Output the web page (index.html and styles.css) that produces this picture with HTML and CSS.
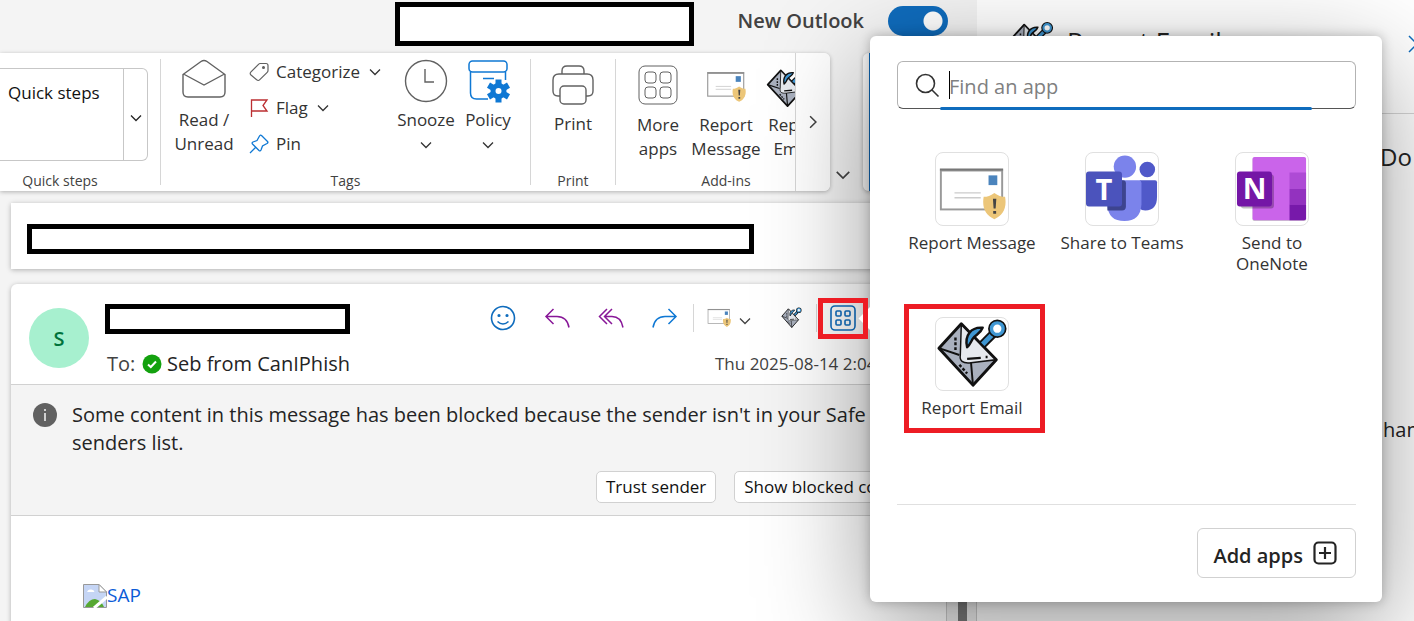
FILE: index.html
```html
<!DOCTYPE html>
<html lang="en">
<head>
<meta charset="utf-8">
<title>Outlook</title>
<link rel="stylesheet" href="styles.css">
</head>
<body>
<svg class="defs" aria-hidden="true">
  <symbol id="chev" viewBox="0 0 12 8"><path d="M1 1.500 6 6.500 11 1.500" fill="none" stroke="currentColor" stroke-width="1.300"/></symbol>
  <symbol id="grid" viewBox="0 0 40 40"><g fill="none" stroke="currentColor"><rect x="1" y="1" width="38" height="38" rx="6"/><rect x="7" y="7" width="11" height="11" rx="3"/><rect x="22" y="7" width="11" height="11" rx="3"/><rect x="7" y="22" width="11" height="11" rx="3"/><rect x="22" y="22" width="11" height="11" rx="3"/></g></symbol>
  <symbol id="apps" viewBox="0 0 26 26"><g fill="none" stroke="currentColor" stroke-width="1.600"><rect x="1" y="1" width="24" height="24" rx="4"/><rect x="6" y="6" width="5" height="5" rx="1"/><rect x="15" y="6" width="5" height="5" rx="1"/><rect x="6" y="15" width="5" height="5" rx="1"/><rect x="15" y="15" width="5" height="5" rx="1"/></g></symbol>
  <symbol id="report" viewBox="0 0 70 54">
    <rect x="3" y="3" width="63" height="40" fill="#fff" stroke="#999" stroke-width="2"/>
    <path d="M2 2h65" stroke="#777" stroke-width="2"/>
    <path d="M17 26h27M17 31h27" stroke="#ccc" stroke-width="1.500"/>
    <rect x="52" y="8" width="9" height="10" fill="#4b84bd"/>
    <path d="M58 26c4 3 7 4 11 4 2 11-2 19-11 23-9-4-13-12-11-23 4 0 7-1 11-4z" fill="#ecc679"/>
    <path d="M56.500 32h3.500l-.7 10h-2.100zM56.800 44.500h3v3h-3z" fill="#444"/>
  </symbol>
  <symbol id="hook" viewBox="0 0 74 74">
    <path d="M3 31 26 6 62 43 38 69z" fill="#a9b0be" stroke="#111" stroke-width="3" stroke-linejoin="round"/>
    <path d="M26 7 61 43 36 46C27 47 24 44 25 38z" fill="#e6e9ee" stroke="#111" stroke-width="1.500"/>
    <path d="M3 31 24 38M36 46l2 23" fill="none" stroke="#111" stroke-width="2"/>
    <path d="M32 42l14-1M51 40h2" stroke="#111" stroke-width="2.500"/>
    <path d="M20 20v13M24 48l8 9" stroke="#111" stroke-width="2.500" stroke-dasharray="3 2"/>
    <path d="M47 28 59 16" stroke="#111" stroke-width="9"/>
    <path d="M48 27 59 16" stroke="#3f97d3" stroke-width="5"/>
    <circle cx="63" cy="11" r="6" fill="none" stroke="#111" stroke-width="7"/>
    <circle cx="63" cy="11" r="6" fill="#fff" stroke="#3f97d3" stroke-width="3.500"/>
    <path d="M48 10C36 9 29 18 32 30 35 28 36 24 38 21 41 17 46 16 48 10z" fill="#3f97d3" stroke="#111" stroke-width="2.500" stroke-linejoin="round"/>
  </symbol>
</svg>

<div class="app">
  <main class="main">
    <header class="topbar">
      <div class="redacted redacted-top"></div>
      <label class="switch">New Outlook <input type="checkbox" role="switch" checked></label>
    </header>

    <div class="ribbon-row">
      <div class="ribbon">
        <section class="group group-quick">
          <div class="quick-box"><button class="quick-name">Quick steps</button><button class="quick-more" aria-label="More quick steps"><svg class="chev"><use href="#chev"/></svg></button></div>
          <h2 class="group-label">Quick steps</h2>
        </section>
        <section class="group group-tags">
          <div class="tools">
            <button class="tool tool-read">
              <svg class="big" viewBox="0 0 44 44" fill="none" stroke="#616161" stroke-width="1.400"><path d="M1 15.500 19 2.500q3-2 6 0L43 15.500V33q0 5-5 5H6q-5 0-5-5zM1.500 15 22 26 42.500 15"/></svg>
              <span>Read /<br>Unread</span>
            </button>
            <div class="stack">
              <button class="line"><svg class="small" viewBox="0 0 20 20" fill="none" stroke="#616161" stroke-width="1.200"><path d="M11 1.500h6q2 0 2 2v5q0 1-.8 1.800l-7.400 7.400q-1.600 1.600-3.200 0L2 13q-1.600-1.600 0-3.200l7.500-7.500q.8-.8 1.500-.8z"/><circle cx="14.500" cy="5.500" r=".9" fill="#616161"/></svg>Categorize<svg class="chev"><use href="#chev"/></svg></button>
              <button class="line"><svg class="small" viewBox="0 0 20 20" fill="none" stroke="#bc2f32" stroke-width="1.300"><path d="M2.500 19V2H18l-4 5.500L18 13H2.500"/></svg>Flag<svg class="chev"><use href="#chev"/></svg></button>
              <button class="line"><svg class="small" viewBox="0 0 20 20" fill="none" stroke="#0f78d4" stroke-width="1.300"><path d="m12.500 1.500 6 6q1 1-.5 2l-4.500 2.500-1.500 4q-.7 1.500-2 .5L3.500 10q-1-1.200.5-2l4-1.500L10.500 2q1-1.500 2-.5zM6.500 13.500 1 19"/></svg>Pin</button>
            </div>
            <button class="tool tool-side">
              <svg class="big" viewBox="0 0 44 44" fill="none" stroke="#616161" stroke-width="1.400"><circle cx="22" cy="22" r="20.500"/><path d="M21 10v13h9"/></svg>
              <span>Snooze</span><svg class="chev"><use href="#chev"/></svg>
            </button>
            <button class="tool tool-side">
              <svg class="big" viewBox="0 0 44 44" fill="none" stroke="#0f78d4" stroke-width="1.500"><rect x="3" y="2" width="38" height="11" rx="3.500"/><path d="M4.500 13v21q0 6 6 6H22M39.500 13v8M17 19.500h11"/><g transform="translate(32.500 32)"><circle r="5.500" stroke-width="5"/><path d="M0-11.500V-6M0 6V11.500M-10-5.800l5 2.900M10 5.800 5 2.900M10-5.800 5-2.900M-10 5.800l5-2.900" stroke-width="6"/></g></svg>
              <span>Policy</span><svg class="chev"><use href="#chev"/></svg>
            </button>
          </div>
          <h2 class="group-label">Tags</h2>
        </section>
        <section class="group group-print">
          <div class="tools"><button class="tool tool-print">
            <svg class="big" viewBox="0 0 44 44" fill="none" stroke="#616161" stroke-width="1.400"><path d="M9 33H7q-5 0-5-5V17q0-6 6-6h28q6 0 6 6v11q0 5-5 5h-2M11 11V8q0-5 5-5h12q5 0 5 5v3"/><rect x="9" y="23" width="26" height="18" rx="4" fill="#fff"/></svg>
            <span>Print</span></button></div>
          <h2 class="group-label">Print</h2>
        </section>
        <section class="group group-addins">
          <div class="tools">
            <button class="tool tool-more"><svg class="big"><use href="#grid"/></svg><span>More<br>apps</span></button>
            <button class="tool tool-msg"><svg class="big"><use href="#report"/></svg><span>Report<br>Message</span></button>
            <button class="tool tool-mail"><svg class="big"><use href="#hook"/></svg><span>Report<br>Email</span></button>
          </div>
          <h2 class="group-label">Add-ins</h2>
        </section>
        <button class="ribbon-next" aria-label="Scroll ribbon"><svg class="chev chev-right"><use href="#chev"/></svg></button>
      </div>
      <button class="ribbon-fold" aria-label="Ribbon display"><svg class="chev chev-wide"><use href="#chev"/></svg></button>
      <div class="side-card"></div>
    </div>

    <div class="reading">
      <div class="cards">
        <div class="card subject"><div class="redacted redacted-subject"></div></div>
        <article class="card message">
          <header class="msg-head">
            <div class="avatar">S</div>
            <div class="who">
              <div class="redacted redacted-from"></div>
              <div class="to"><span class="to-label">To:</span><svg class="tick" viewBox="0 0 20 20"><circle cx="10" cy="10" r="9.500" fill="#13a10e"/><path d="m6 10.500 2.800 2.500L14 7.500" fill="none" stroke="#fff" stroke-width="2"/></svg>Seb from CanIPhish</div>
            </div>
            <div class="meta">
              <div class="actions">
                <button class="act" aria-label="React"><svg viewBox="0 0 26 26" fill="none" stroke="#0f6cbd" stroke-width="1.600"><circle cx="13" cy="13" r="11.500"/><path d="M7.500 16.500q5.500 5 11 0"/><circle cx="9" cy="10.500" r=".8" fill="#0f6cbd"/><circle cx="17" cy="10.500" r=".8" fill="#0f6cbd"/></svg></button>
                <button class="act" aria-label="Reply"><svg viewBox="0 0 26 26" fill="none" stroke="#881798" stroke-width="1.500"><path d="M9.500 4 2 11.500 9.500 19M2 11.500h11q10 0 12 11"/></svg></button>
                <button class="act" aria-label="Reply all"><svg viewBox="0 0 26 26" fill="none" stroke="#881798" stroke-width="1.500"><path d="M9 4 1.500 11.500 9 19M14 4 6.500 11.500 14 19M6.500 11.500H14q9 0 11 11"/></svg></button>
                <button class="act" aria-label="Forward"><svg viewBox="0 0 26 26" fill="none" stroke="#0f78d4" stroke-width="1.500"><path d="M16.500 4 24 11.500 16.500 19M24 11.500H13q-10 0-12 11"/></svg></button>
                <span class="rule"></span>
                <button class="act act-msg" aria-label="Report Message"><svg viewBox="0 0 70 54"><use href="#report"/></svg><svg class="chev"><use href="#chev"/></svg></button>
                <button class="act act-hook" aria-label="Report Email"><svg viewBox="0 0 74 62" preserveAspectRatio="none"><use href="#hook" width="74" height="62" preserveAspectRatio="none"/></svg></button>
                <span class="rule"></span>
                <button class="act act-apps" aria-label="Apps"><svg><use href="#apps"/></svg><span class="mark mark-apps"></span></button>
              </div>
              <time class="date">Thu 2025-08-14 2:04 PM</time>
            </div>
          </header>
          <div class="notice">
            <svg class="info" viewBox="0 0 24 24"><circle cx="12" cy="12" r="12" fill="#616161"/><path d="M12 10v8M12 6v2" stroke="#ddd" stroke-width="1.800"/></svg>
            <p>Some content in this message has been blocked because the sender isn't in your Safe senders list.</p>
            <div class="notice-actions"><button>Trust sender</button><button>Show blocked content</button></div>
          </div>
          <div class="msg-body">
            <a href="#"><svg class="broken" viewBox="0 0 24 24"><path d="M.5.500H16L23.500 8v15.500H.5z" fill="#c5d5f5" stroke="#999"/><path d="M16 .5V8h7.500z" fill="#fff" stroke="#999"/><path d="M4 8q1-3 3.500-2.500Q11 5 11.500 8z" fill="#fff"/><path d="M2 23q4-8 10-8 6 1 9 8z" fill="#56a832"/><path d="M24 13 11 24" stroke="#fff" stroke-width="3"/></svg>SAP</a>
          </div>
        </article>
      </div>
      <div class="scrollbar"><span></span></div>
    </div>
  </main>

  <aside class="pane">
    <header class="pane-head"><svg class="pane-icon"><use href="#hook"/></svg><h2>Report Email</h2><button aria-label="Close pane"><svg viewBox="0 0 18 18"><path d="m1 1 16 16M17 1 1 17" stroke="#0f6cbd" stroke-width="1.500"/></svg></button></header>
    <p class="pane-first">Do</p>
    <p class="pane-second">han</p>
  </aside>

  <div class="popover" role="dialog" aria-label="Apps">
    <label class="search">
      <svg viewBox="0 0 24 24" fill="none" stroke="#333" stroke-width="1.600"><circle cx="10.500" cy="10.500" r="9"/><path d="m17 17 6.500 6.500"/></svg>
      <span class="caret"></span>
      <input type="text" placeholder="Find an app" aria-label="Find an app">
    </label>
    <div class="apps">
      <button class="app-item"><span class="tile"><svg viewBox="-2 -15 74 74"><use href="#report" width="70" height="54"/></svg></span>Report Message</button>
      <button class="app-item"><span class="tile"><svg viewBox="0 0 74 74">
        <circle cx="40" cy="14" r="11.500" fill="#7b83eb"/><circle cx="63" cy="17" r="8" fill="#5059c9"/>
        <path d="M55 28h16q2 0 2 2v15q0 14-12 14-4 0-6-2z" fill="#5059c9"/>
        <path d="M22 28h32q3 0 3 3v22q-1 17-17.500 17T22 54z" fill="#7b83eb"/>
        <path d="M22 28h16q3 0 3 3v24q0 4-4 4H22z" fill="#3d448f"/>
        <rect x="0" y="19" width="37" height="36" rx="3" fill="#4b53bc"/>
        <text x="18.500" y="48" class="logo-letter">T</text></svg></span>Share to Teams</button>
      <button class="app-item"><span class="tile"><svg viewBox="0 0 74 74">
        <rect x="17" y="5" width="55" height="65" rx="2" fill="#000" opacity=".2"/>
        <rect x="17" y="4" width="55" height="65" rx="2" fill="#ca64ea"/>
        <path d="M55 20h17v17H55z" fill="#ae4bd5"/><path d="M55 37h17v16H55z" fill="#9332bf"/><path d="M55 53h17v14q0 2-2 2H55z" fill="#7719aa"/>
        <rect x="5" y="22" width="34" height="35" rx="3" fill="#000" opacity=".25"/>
        <rect x="1" y="19" width="36" height="36" rx="3" fill="#7416a6"/>
        <text x="19" y="47" class="logo-letter">N</text></svg></span>Send to<br>OneNote</button>
      <button class="app-item"><span class="tile"><svg viewBox="0 0 74 74"><use href="#hook"/></svg></span>Report Email<span class="mark mark-email"></span></button>
    </div>
    <footer class="pop-foot"><button class="add"><span>Add apps</span><svg viewBox="0 0 24 24" fill="none" stroke="#242424" stroke-width="2.200"><rect x="1.500" y="1.500" width="21" height="21" rx="4"/><path d="M12 6v12M6 12h12"/></svg></button></footer>
  </div>
</div>
</body>
</html>
```
FILE: styles.css
```css
* { box-sizing: border-box; }
body { margin: 0; font: 17px/24px "Open Sans", "Noto Sans", sans-serif; color: #242424; background: #f4f4f4; overflow: hidden; }
button { font: inherit; color: inherit; background: none; border: 0; padding: 0; margin: 0; }
h2, p { margin: 0; font-weight: 400; }
svg { display: block; flex: none; overflow: visible; }
.defs { position: absolute; width: 0; height: 0; }

.app { position: relative; display: flex; height: 100vh; overflow: hidden; }
.main { flex: 1; min-width: 0; display: flex; flex-direction: column; }
.redacted { background: #fff; border: 5px solid #000; }
.chev { width: 12px; height: 8px; }
.chev-wide { width: 16px; height: 10px; }
.chev-right { transform: rotate(-90deg); width: 14px; height: 10px; }

.topbar { height: 53px; flex: none; display: flex; justify-content: flex-end; align-items: flex-start; padding: 2px 29px 0 0; }
.redacted-top { width: 299px; height: 44px; }
.switch { display: flex; align-items: center; justify-content: flex-end; width: 254px; gap: 24px; padding-top: 4px; font-size: 20px; line-height: 30px; font-weight: 600; color: #424242; }
.switch input { appearance: none; margin: 0; width: 60px; height: 30px; border-radius: 15px; background: radial-gradient(circle at 45px 15px, #fff 9px, #0f6cbd 10px); }

.ribbon-row { flex: none; display: flex; height: 138px; }
.ribbon { flex: none; width: 830px; display: flex; background: #fff; border-radius: 0 6px 6px 0; box-shadow: 0 1px 4px rgba(0,0,0,.28); }
.group { flex: none; display: flex; flex-direction: column; justify-content: space-between; height: 126px; margin-top: 6px; border-right: 1px solid #d6d6d6; }
.group-quick { width: 161px; padding-top: 9px; }
.group-tags { width: 370px; padding-left: 14px; }
.group-print { width: 85px; }
.group-addins { width: 179px; height: 132px; padding: 0 0 6px 14px; border: 0; overflow: hidden; }
.group-label { font-size: 14px; line-height: 20px; margin-bottom: -6px; color: #424242; text-align: center; }
.group-quick .group-label { width: 120px; }
.group-tags .group-label { margin-right: 14px; }
.group-addins .group-label { width: 192px; }
.quick-box { width: 148px; height: 93px; display: flex; border: 1px solid #c7c7c7; border-left: 0; border-radius: 0 6px 6px 0; }
.quick-name { flex: 1; padding: 12px 0 0 8px; text-align: left; align-self: flex-start; color: #111; white-space: nowrap; }
.quick-more { width: 24px; display: grid; place-items: center; padding-top: 6px; border-left: 1px solid #c7c7c7; }
.tools { display: flex; align-items: flex-start; }
.tool { flex: none; display: flex; flex-direction: column; align-items: center; text-align: center; color: #333; }
.tool .big { width: 44px; height: 44px; margin-bottom: 5px; }
.tool .chev { margin-top: 9px; }
.tool-read { width: 58px; }
.tool-side { width: 62px; }
.tool-print { width: 84px; padding-top: 4px; }
.tool-more { width: 56px; padding-top: 6px; }
.tool-more .big { width: 40px; height: 40px; margin-bottom: 8px; color: #616161; }
.tool-msg { width: 80px; padding-top: 8px; }
.tool-msg .big { width: 40px; height: 40px; margin-bottom: 6px; }
.tool-mail { width: 58px; padding-top: 8px; }
.tool-mail .big { align-self: flex-start; width: 42px; height: 42px; margin-bottom: 4px; }
.stack { width: 162px; padding-left: 16px; margin-top: -5px; color: #333; }
.line { display: flex; align-items: center; gap: 7px; height: 36px; }
.line .small { width: 20px; height: 20px; }
.line .chev { margin-left: 2px; }
.ribbon-next { flex: 1; display: grid; place-items: center; border-left: 1px solid #d6d6d6; border-radius: 0 6px 6px 0; color: #424242; background: #fff; }
.ribbon-fold { width: 33px; padding: 0 0 11px 5px; display: flex; align-items: flex-end; color: #424242; }
.side-card { flex: 1; background: linear-gradient(90deg, #fff 6px, #0f6cbd 6px); border-radius: 6px 0 0 6px; box-shadow: 0 1px 4px rgba(0,0,0,.28); }

.reading { flex: 1; min-height: 0; display: flex; }
.cards { flex: 1; min-width: 0; display: flex; flex-direction: column; gap: 15px; padding: 12px 0 0 11px; }
.card { background: #fff; box-shadow: 0 1px 5px rgba(0,0,0,.28); }
.subject { padding: 21px 16px 15px; }
.redacted-subject { width: 727px; height: 30px; }
.message { flex: 1; border-radius: 6px 0 0 0; }
.msg-head { display: flex; height: 101px; padding: 0 16px 0 18px; border-bottom: 1px solid #d1d1d1; }
.avatar { width: 60px; height: 60px; margin: 24px 16px 0 0; border-radius: 50%; background: #a7f0cf; color: #00723b; font-weight: 600; font-size: 20px; line-height: 62px; text-align: center; }
.who { flex: 1; padding-top: 20px; }
.redacted-from { width: 245px; height: 30px; }
.to { display: flex; align-items: center; gap: 5px; padding: 16px 0 0 2px; font-size: 20px; line-height: 28px; white-space: nowrap; }
.to-label { width: 30px; color: #424242; }
.tick { width: 20px; height: 20px; }
.meta { width: 440px; flex: none; }
.actions { display: flex; align-items: center; height: 68px; }
.act { flex: none; width: 54px; height: 40px; display: flex; align-items: center; }
.act svg { width: 26px; height: 26px; }
.act + .rule { margin-left: -13px; }
.rule { width: 1px; height: 28px; background: #d6d6d6; margin-right: 13px; }
.act-msg { width: 72px; gap: 8px; color: #424242; }
.act-msg svg { width: 24px; height: 20px; }
.act-msg .chev { width: 12px; height: 8px; margin-top: 6px; }
.act-hook { width: 50px; }
.act-hook svg { width: 25px; height: 22px; }
.act-apps { position: relative; width: 26px; color: #0f6cbd; }
.mark { position: absolute; border: 5px solid #ed1c24; z-index: 20; }
.mark-apps { width: 50px; height: 41px; left: -12px; top: 0; }
.mark-email { left: 7px; right: 2px; top: -13px; height: 129px; }
.date { display: block; padding-left: 225px; color: #424242; white-space: nowrap; }

.notice { display: grid; grid-template-columns: 24px 1fr; column-gap: 15px; padding: 16px 16px 12px 22px; background: #f4f4f4; border-bottom: 1px solid #d1d1d1; }
.notice p { font-size: 20px; line-height: 28px; }
.info { width: 24px; height: 24px; margin-top: 2px; }
.notice-actions { grid-column: 1 / -1; display: flex; gap: 18px; padding: 14px 0 0 563px; }
.notice-actions button { height: 32px; padding: 0 9px; border: 1px solid #d1d1d1; border-radius: 5px; background: #fff; color: #111; white-space: nowrap; }
.msg-body { padding: 66px 72px; }
.msg-body a { display: inline-flex; align-items: flex-start; font-size: 19px; line-height: 26px; color: #0b5cd7; text-decoration: none; }
.broken { width: 24px; height: 24px; margin-top: 2px; }
.scrollbar { width: 31px; padding: 0 11px; border-left: 1px solid #ccc; border-right: 1px solid #ccc; background: #f0f0f0; }
.scrollbar span { display: block; width: 9px; height: 100%; background: #7a7a7a; }

.pane { width: 437px; flex: none; background: #fff; overflow: hidden; font-size: 20px; line-height: 28px; }
.pane-head { display: flex; align-items: center; height: 114px; padding: 0 0 26px 31px; border-bottom: 1px solid #d6d6d6; }
.pane-icon { width: 46px; height: 46px; }
.pane-head h2 { font-size: 26px; line-height: 32px; margin: 0 0 6px 13px; }
.pane-head button { margin-left: auto; margin-right: -12px; }
.pane-head button svg { width: 18px; height: 18px; }
.pane-first { padding: 29px 0 0 403px; font-size: 24px; }
.pane-second { padding: 245px 0 0 406px; white-space: nowrap; }

.popover { position: absolute; right: 32px; top: 36px; width: 512px; padding: 25px 26px 24px 27px; display: flex; flex-direction: column; background: #fff; border-radius: 6px; box-shadow: 0 0 12px rgba(0,0,0,.25), 0 32px 110px rgba(0,0,0,.4); }
.popover::before { content: ""; position: absolute; left: -8px; top: 274px; width: 17px; height: 17px; background: #fff; transform: rotate(45deg); }
.search { position: relative; display: flex; align-items: center; gap: 10px; height: 48px; padding-left: 17px; border: 1px solid #b3b3b3; border-bottom-color: #555; border-radius: 6px; }
.search::after { content: ""; position: absolute; left: 42px; right: 43px; bottom: -2px; height: 3px; border-radius: 2px; background: #0f6cbd; }
.search svg { width: 24px; height: 24px; }
.caret { width: 1px; height: 28px; margin-right: -11px; background: #000; }
.search input { flex: 1; min-width: 0; border: 0; padding: 3px 0 0; outline: 0; background: none; font: 20px/28px "Open Sans", "Noto Sans", sans-serif; }
.search input::placeholder { color: #808080; opacity: 1; }
.apps { display: grid; grid-template-columns: repeat(3, 150px); grid-auto-rows: 165px; margin-top: 43px; padding-bottom: 22px; border-bottom: 1px solid #e0e0e0; }
.app-item { position: relative; display: block; align-self: start; text-align: center; line-height: 21px; color: #333; white-space: nowrap; }
.tile { display: block; width: 74px; height: 74px; margin: 0 auto 6px; border: 1px solid #e0e0e0; border-radius: 8px; overflow: hidden; }
.tile svg { width: 72px; height: 72px; }
.logo-letter { font: 700 30px "Open Sans", sans-serif; fill: #fff; text-anchor: middle; }
.pop-foot { display: flex; justify-content: flex-end; padding-top: 23px; }
.add { display: flex; align-items: center; gap: 10px; height: 50px; padding: 0 18px 0 15px; border: 1px solid #d1d1d1; border-radius: 6px; font-size: 20px; font-weight: 600; }
.add span { padding-top: 6px; }
.add svg { width: 24px; height: 24px; }
```
